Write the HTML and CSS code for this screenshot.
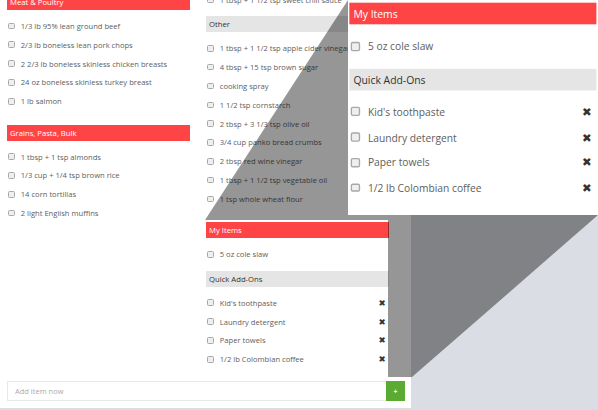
FILE: index.html
```html
<!DOCTYPE html>
<html>
<head lang="en">
    <meta charset="UTF-8">
    <title>Shopping list</title>
    <link rel="stylesheet" href="styles.css">
</head>
<body>
<div class="app">
    <div class="lists">
        <div class="col col_left">
            <div class="group">
                <div class="head">Meat &amp; Poultry</div>
                <ul class="items">
                    <li class="item"><input type="checkbox"><span>1/3 lb 95% lean ground beef</span></li>
                    <li class="item"><input type="checkbox"><span>2/3 lb boneless lean pork chops</span></li>
                    <li class="item"><input type="checkbox"><span>2 2/3 lb boneless skinless chicken breasts</span></li>
                    <li class="item"><input type="checkbox"><span>24 oz boneless skinless turkey breast</span></li>
                    <li class="item"><input type="checkbox"><span>1 lb salmon</span></li>
                </ul>
            </div>
            <div class="group">
                <div class="head">Grains, Pasta, Bulk</div>
                <ul class="items">
                    <li class="item"><input type="checkbox"><span>1 tbsp + 1 tsp almonds</span></li>
                    <li class="item"><input type="checkbox"><span>1/3 cup + 1/4 tsp brown rice</span></li>
                    <li class="item"><input type="checkbox"><span>14 corn tortillas</span></li>
                    <li class="item"><input type="checkbox"><span>2 light English muffins</span></li>
                </ul>
            </div>
        </div>
        <div class="col col_right">
            <div class="group">
                <ul class="items">
                    <li class="item"><input type="checkbox"><span>1 tbsp + 1 1/2 tsp sweet chili sauce</span></li>
                </ul>
                <div class="head head_gray">Other</div>
                <ul class="items">
                    <li class="item"><input type="checkbox"><span>1 tbsp + 1 1/2 tsp apple cider vinegar</span></li>
                    <li class="item"><input type="checkbox"><span>4 tbsp + 15 tsp brown sugar</span></li>
                    <li class="item"><input type="checkbox"><span>cooking spray</span></li>
                    <li class="item"><input type="checkbox"><span>1 1/2 tsp cornstarch</span></li>
                    <li class="item"><input type="checkbox"><span>2 tbsp + 3 1/3 tsp olive oil</span></li>
                    <li class="item"><input type="checkbox"><span>3/4 cup panko bread crumbs</span></li>
                    <li class="item"><input type="checkbox"><span>2 tbsp red wine vinegar</span></li>
                    <li class="item"><input type="checkbox"><span>1 tbsp + 1 1/2 tsp vegetable oil</span></li>
                    <li class="item"><input type="checkbox"><span>1 tsp whole wheat flour</span></li>
                </ul>
            </div>
            <div class="group">
                <div class="head">My Items</div>
                <ul class="items">
                    <li class="item"><input type="checkbox"><span>5 oz cole slaw</span></li>
                </ul>
                <div class="head head_gray">Quick Add-Ons</div>
                <ul class="items">
                    <li class="item"><input type="checkbox"><span>Kid's toothpaste</span><i class="remove">&#10006;</i></li>
                    <li class="item"><input type="checkbox"><span>Laundry detergent</span><i class="remove">&#10006;</i></li>
                    <li class="item"><input type="checkbox"><span>Paper towels</span><i class="remove">&#10006;</i></li>
                    <li class="item"><input type="checkbox"><span>1/2 lb Colombian coffee</span><i class="remove">&#10006;</i></li>
                </ul>
            </div>
        </div>
    </div>
    <div class="add_bar">
        <input class="add_input" type="text" placeholder="Add item now">
        <button class="add_btn">+</button>
    </div>
</div>

<!-- zoom callout: shaded beam from the source area to the magnified panel -->
<svg class="beam" width="598" height="410" viewBox="0 0 598 410">
    <path fill-rule="evenodd" d="M205 220 L348 0 L598 0 L598 215 L412 377 L205 377 Z M205 220 L388 220 L388 377 L205 377 Z"/>
</svg>

<div class="lens">
    <div class="lens_inner">
        <div class="head">My Items</div>
        <ul class="items">
            <li class="item"><input type="checkbox"><span>5 oz cole slaw</span></li>
        </ul>
        <div class="head head_gray">Quick Add-Ons</div>
        <ul class="items">
            <li class="item"><input type="checkbox"><span>Kid's toothpaste</span><i class="remove">&#10006;</i></li>
            <li class="item"><input type="checkbox"><span>Laundry detergent</span><i class="remove">&#10006;</i></li>
            <li class="item"><input type="checkbox"><span>Paper towels</span><i class="remove">&#10006;</i></li>
            <li class="item"><input type="checkbox"><span>1/2 lb Colombian coffee</span><i class="remove">&#10006;</i></li>
        </ul>
    </div>
</div>
</body>
</html>
```

FILE: styles.css
```css
* {
    margin: 0;
    padding: 0;
    box-sizing: border-box;
}

body {
    position: relative;
    width: 598px;
    height: 410px;
    overflow: hidden;
    background: #dadde3;
    font-family: "Open Sans", "Liberation Sans", sans-serif;
}

.app {
    display: flex;
    flex-direction: column;
    width: 411px;
    height: 408px;
    background: #fff;
}

.lists {
    display: flex;
    gap: 16px;
    height: 377px;
    padding-left: 7px;
    overflow: hidden;
}

.col {
    flex: none;
    width: 183px;
}

.col_left {
    margin-top: -6px;
}

.col_right {
    margin-top: -16px;
}

.group {
    margin-bottom: 7px;
}

.head {
    height: 16px;
    line-height: 16px;
    padding-left: 3px;
    font-size: 7.7px;
    color: #fff;
    background: #fe4444;
}

.head_gray {
    color: #333;
    background: #e5e5e5;
}

.items {
    list-style: none;
    padding: 6.5px 0 7px;
}

.item {
    display: flex;
    align-items: center;
    height: 18.85px;
    font-size: 7.6px;
    color: #5e5e5e;
}

.item input {
    flex: none;
    appearance: none;
    width: 6.6px;
    height: 6.6px;
    margin: 0 6px 0 1.2px;
    border: 1px solid #a8a8a8;
    border-radius: 1.5px;
    background: #efefef;
}

.item span {
    flex: 1;
}

.remove {
    width: 9px;
    margin-right: 2.5px;
    font-style: normal;
    font-family: "DejaVu Sans", sans-serif;
    font-size: 8.6px;
    color: #333;
    text-align: center;
}

.add_bar {
    display: flex;
    height: 20px;
    margin: 4px 6px 0 7px;
}

.add_input {
    flex: 1;
    padding-left: 7px;
    border: 1px solid #e8e8e8;
    border-right: none;
    outline: none;
    font-family: "Open Sans", "Liberation Sans", sans-serif;
    font-size: 7.5px;
    color: #999;
}

.add_input::placeholder {
    color: #aaa;
}

.add_btn {
    width: 19px;
    border: none;
    background: #5aab32;
    color: #fff;
    font-family: "Open Sans", sans-serif;
    font-size: 7px;
    font-weight: bold;
}

.beam {
    position: absolute;
    left: 0;
    top: 0;
    fill: rgba(0, 0, 0, .41);
}

.lens {
    position: absolute;
    left: 348px;
    top: 0;
    width: 250px;
    height: 215px;
    overflow: hidden;
    background: #fff;
}

.lens_inner {
    width: 184px;
    padding: 2.4px 0 0 1px;
    transform: scale(1.35);
    transform-origin: 0 0;
}
```
